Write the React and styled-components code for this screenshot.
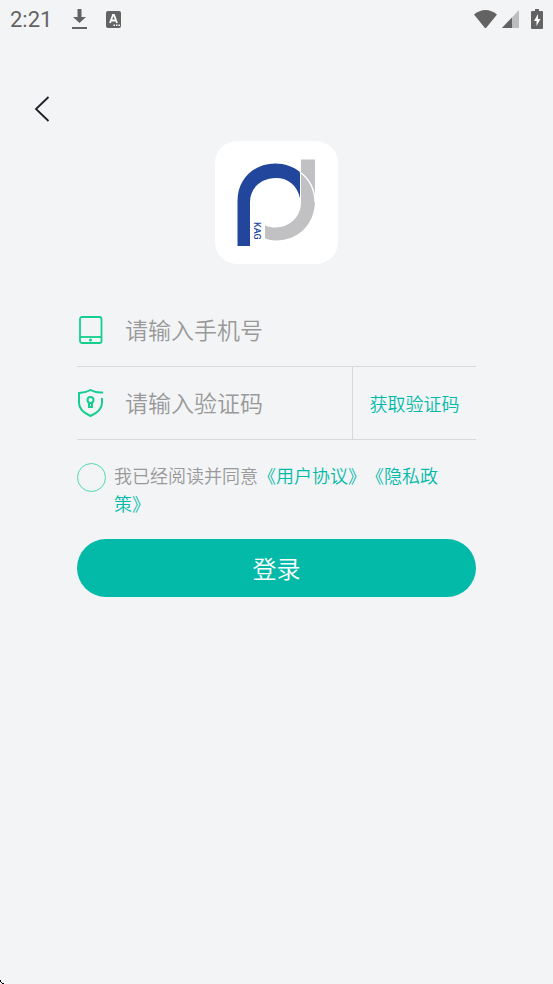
import React, { useState } from "react";
import styled, { createGlobalStyle } from "styled-components";

const teal = "#03baa9";
const green = "#14cf8d";
const line = "#d8d9db";

const GlobalStyle = createGlobalStyle`
  * { box-sizing: border-box; }
  body {
    margin: 0;
    background: #f3f4f6;
    font-family: Roboto, "Noto Sans CJK SC", sans-serif;
    font-weight: 350;
    text-spacing-trim: space-all;
  }
  button, input { font: inherit; }
`;

const Screen = styled.div`
  position: relative;
  min-height: 100vh;
  display: flex;
  flex-direction: column;
`;

const StatusBar = styled.header`
  display: flex;
  align-items: center;
  justify-content: space-between;
  height: 38px;
  padding: 0 10px;
  color: #636363;
`;

const StatusGroup = styled.div`
  display: flex;
  align-items: center;
`;

const Clock = styled.time`
  width: 42px;
  margin-right: 19px;
  padding-top: 2px;
  font-size: 22px;
  font-weight: 400;
  line-height: 36px;
`;

const StatusIcon = styled.svg`
  display: block;
  margin-right: ${(p) => p.$gap || 0}px;
`;

const NavBar = styled.nav`
  display: flex;
  padding: 48px 22px 0;
`;

const BackButton = styled.button`
  display: flex;
  align-items: center;
  justify-content: center;
  width: 40px;
  height: 46px;
  padding: 0;
  border: 0;
  background: none;
  cursor: pointer;
`;

const Logo = styled.svg`
  display: block;
  align-self: center;
  width: 123px;
  height: 123px;
  margin-top: 9px;
  border-radius: 22px;
  background: #fff;
`;

const Form = styled.form`
  display: flex;
  flex-direction: column;
  padding: 30px 77px 0;
`;

const Field = styled.div`
  display: flex;
  align-items: center;
  height: 73px;
  border-bottom: 1px solid ${line};
`;

const FieldLabel = styled.label`
  display: flex;
  width: 48px;
  flex: none;
`;

const FieldInput = styled.input`
  flex: 1;
  min-width: 0;
  height: 40px;
  padding: 2px 0 0;
  border: 0;
  outline: 0;
  background: none;
  color: #333;
  font-size: 23px;
  &::placeholder { color: #999; opacity: 1; }
`;

const CodeButton = styled.button`
  align-self: stretch;
  flex: none;
  width: 124px;
  padding: 0;
  border: 0;
  border-left: 1px solid ${line};
  background: none;
  color: ${teal};
  font-size: 18px;
  cursor: pointer;
`;

const Agreement = styled.div`
  display: flex;
  align-items: flex-start;
  gap: 8px;
  padding: 23px 8px 0 0;
`;

const Tick = styled.input`
  appearance: none;
  flex: none;
  width: 29px;
  height: 29px;
  margin: 0;
  border: 1px solid #4fd9a6;
  border-radius: 50%;
  &:checked { background: ${teal}; }
`;

const AgreementText = styled.div`
  color: #999;
  font-size: 18px;
  line-height: 28px;
`;

const TermsLink = styled.a`
  color: ${teal};
  text-decoration: none;
`;

const LoginButton = styled.button`
  height: 58px;
  margin-top: 20px;
  padding: 0 0 2px;
  border: 0;
  border-radius: 29px;
  background: ${teal};
  color: #fff;
  font-size: 24px;
  cursor: pointer;
`;

const CornerMark = styled.svg`
  position: absolute;
  left: 0;
  bottom: 0;
`;

export default function App() {
  const [agreed, setAgreed] = useState(false);
  return (
    <Screen>
      <GlobalStyle />
      <StatusBar>
        <StatusGroup>
          <Clock>2:21</Clock>
          <StatusIcon $gap={18} width="17" height="22" viewBox="0 0 17 22" fill="currentColor" aria-hidden="true">
            <path d="M6.500 1h4v8h4.500l-6.500 6L2 9h4.500zM1 19h15v2H1z" />
          </StatusIcon>
          <StatusIcon width="15" height="17" viewBox="0 0 15 17" aria-hidden="true">
            <rect width="15" height="17" rx="2" fill="currentColor" />
            <path d="M4 12l3-8h1l3 8M5 9.500h5" fill="none" stroke="#fff" strokeWidth="1.800" />
            <path d="M7.500 13.500h1.500v1.500H7.500zM10 13.500h1.500v1.500H10zM12.500 13.500H14v1.500h-1.500z" fill="#fff" />
          </StatusIcon>
        </StatusGroup>
        <StatusGroup>
          <StatusIcon $gap={5} width="23" height="18" viewBox="0 0 23 18" aria-hidden="true">
            <path d="M0 4.500C7-1.500 16-1.500 23 4.500L12.500 17.500q-1 1-2 0z" fill="currentColor" />
          </StatusIcon>
          <StatusIcon $gap={12} width="17" height="18" viewBox="0 0 17 18" aria-hidden="true">
            <path d="M0 18L17 0v18z" fill="#bdbdbe" />
            <path d="M0 18L10 7.500V18z" fill="currentColor" />
          </StatusIcon>
          <StatusIcon width="12" height="20" viewBox="0 0 12 20" aria-hidden="true">
            <path d="M4 0h4v2h3q1 0 1 1v16q0 1-1 1H1q-1 0-1-1V3q0-1 1-1h3z" fill="currentColor" />
            <path d="M7 5L3 12h2.500v5L9.500 10H7z" fill="#fff" />
          </StatusIcon>
        </StatusGroup>
      </StatusBar>

      <NavBar>
        <BackButton type="button" aria-label="返回">
          <svg width="16" height="28" viewBox="0 0 16 28" fill="none" stroke="#1c1f24" strokeWidth="1.800">
            <path d="M14.500 2L2 14l12.500 12" />
          </svg>
        </BackButton>
      </NavBar>

      <Logo viewBox="0 0 123 123" role="img" aria-label="KAG">
        <path d="M22.500 105V60C22.500 37 40 22.500 60 22.500c10 0 18 3 25 8.500v26C82 44 73 37 61 37 46 37 35 47 35 61v44z" fill="#21469b" />
        <path d="M86 18.500h14v41c0 24-17 40-39 40-4 0-8-1-11-2V84.500c4 1.500 7 2 10 2 15 0 26-11 26-25z" fill="#c1c1c3" />
        <path d="M85 31C94 38 100 48 100 61" fill="none" stroke="#fff" strokeWidth="1.500" />
        <text transform="translate(39 81) rotate(90)" fill="#21469b" fontFamily="Roboto" fontWeight="500" fontSize="9">KAG</text>
      </Logo>

      <Form onSubmit={(e) => e.preventDefault()}>
        <Field>
          <FieldLabel htmlFor="phone" aria-label="手机号">
            <svg width="27" height="30" viewBox="0 0 27 30" fill="none" stroke={green} strokeWidth="1.800">
              <rect x="3" y="2" width="21.500" height="26" rx="2" />
              <path d="M3 22h21.500" />
              <circle cx="13.500" cy="25" r="1.500" fill={green} stroke="none" />
            </svg>
          </FieldLabel>
          <FieldInput id="phone" type="tel" placeholder="请输入手机号" />
        </Field>
        <Field>
          <FieldLabel htmlFor="code" aria-label="验证码">
            <svg width="27" height="30" viewBox="0 0 27 30" fill="none" stroke={green} strokeWidth="2">
              <path d="M25 10v5c0 6-5 10-11.500 13C7 25 2 21 2 15V5c5 0 8-1 11.500-3C17 4 20 5 26 4.500" />
              <circle cx="13.500" cy="12" r="3" />
              <path d="M12 14.500V19h3v-4.500" />
            </svg>
          </FieldLabel>
          <FieldInput id="code" type="text" placeholder="请输入验证码" />
          <CodeButton type="button">获取验证码</CodeButton>
        </Field>
        <Agreement>
          <Tick id="agree" type="checkbox" checked={agreed} onChange={(e) => setAgreed(e.target.checked)} />
          <AgreementText>
            <label htmlFor="agree">我已经阅读并同意</label>
            <TermsLink href="#terms">《用户协议》</TermsLink>
            <TermsLink href="#privacy">《隐私政策》</TermsLink>
          </AgreementText>
        </Agreement>
        <LoginButton type="submit">登录</LoginButton>
      </Form>
      <CornerMark width="4" height="4" viewBox="0 0 4 4" aria-hidden="true">
        <path d="M0 0h1v2H0zM1 2h1v1H1zM2 3h2v1H2z" fill="#000" />
      </CornerMark>
    </Screen>
  );
}
